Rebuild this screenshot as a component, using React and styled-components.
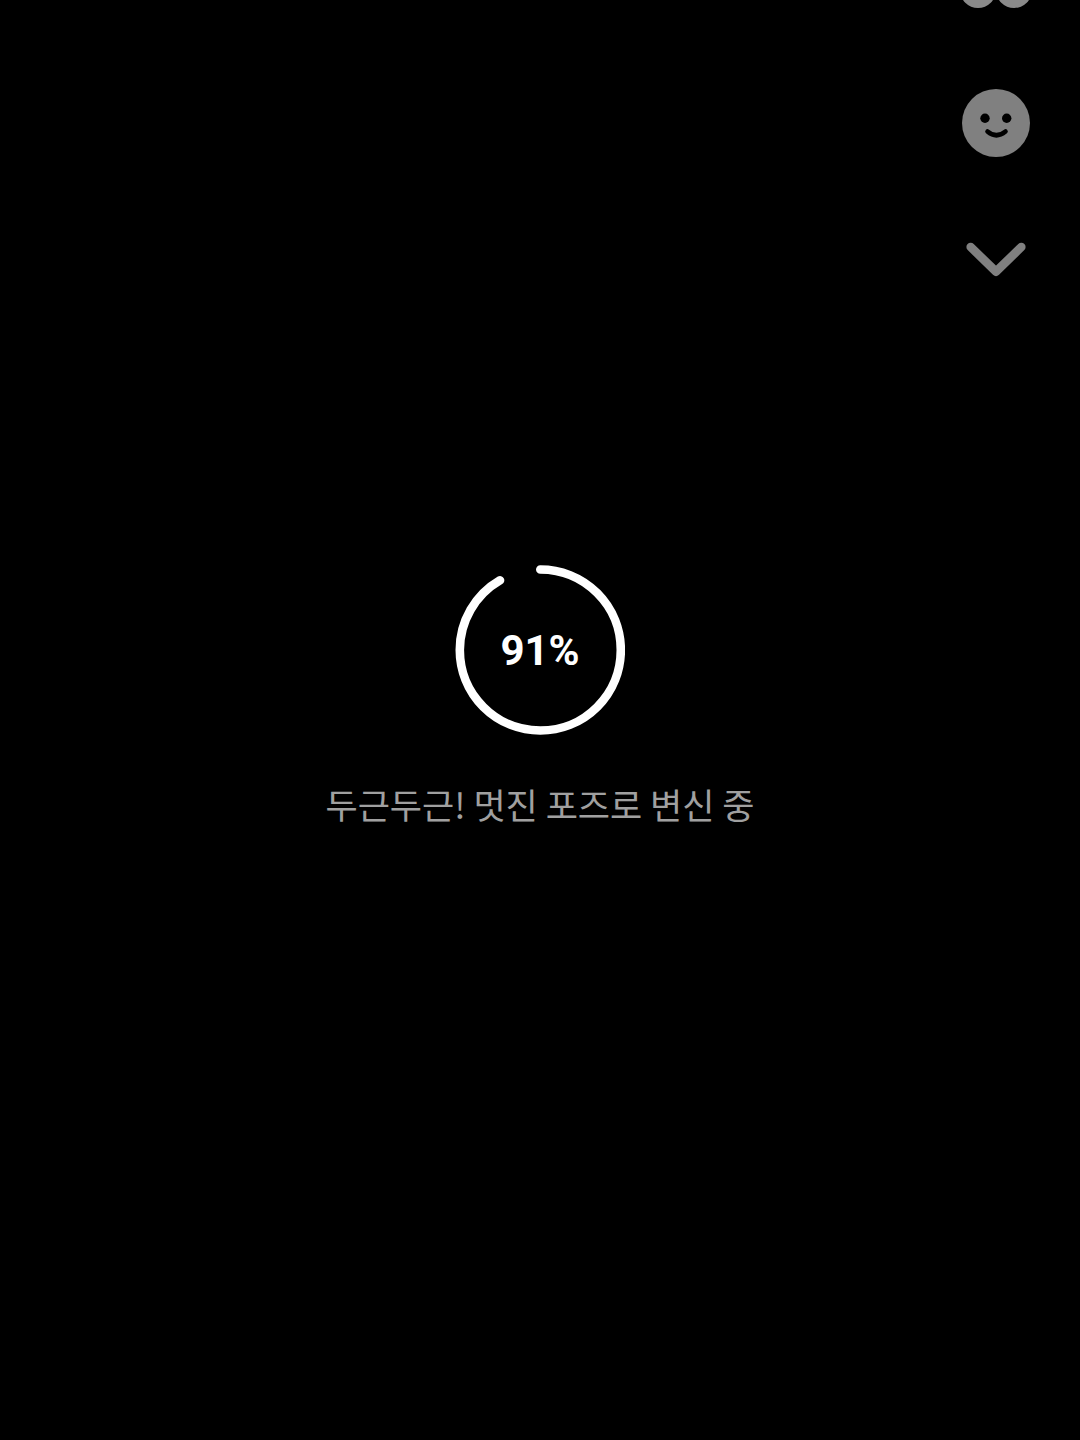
import React from "react";
import styled, { createGlobalStyle } from "styled-components";

const Global = createGlobalStyle`
  html, body { margin: 0; padding: 0; background: #000; }
`;

const Page = styled.main`
  width: 1080px;
  height: 1440px;
  background: #000;
  overflow: hidden;
  display: flex;
  flex-direction: column;
`;

const Rail = styled.nav`
  align-self: flex-end;
  width: 68px;
  margin-right: 50px;
  display: flex;
  flex-direction: column;
  align-items: center;
`;

const TopIcon = styled.svg`
  display: block;
  width: 68px;
  height: 9px;
`;

const FaceButton = styled.svg`
  display: block;
  width: 68px;
  height: 68px;
  margin-top: 80px;
`;

const Chevron = styled.svg`
  display: block;
  width: 62px;
  height: 36px;
  margin-top: 85px;
`;

const Loader = styled.section`
  margin-top: 287px;
  display: flex;
  flex-direction: column;
  align-items: center;
`;

const RingWrap = styled.div`
  position: relative;
  width: 170px;
  height: 170px;
`;

const Ring = styled.svg`
  display: block;
  width: 170px;
  height: 170px;
`;

const Percent = styled.div`
  position: absolute;
  inset: 0;
  padding-top: 2px;
  display: flex;
  align-items: center;
  justify-content: center;
  color: #fff;
  font: 700 42px/1 Roboto, "Noto Sans", sans-serif;
`;

const Message = styled.p`
  margin: 46px 0 0;
  color: #a0a0a0;
  font: 400 35px/46px "Noto Sans CJK KR", "Noto Sans", sans-serif;
  white-space: nowrap;
`;

const R = 80.5;
const C = 2 * Math.PI * R;
const GREY = "#808080";

export default function App() {
  return (
    <Page>
      <Global />
      <Rail>
        <TopIcon viewBox="0 0 68 9" aria-hidden="true">
          <circle cx="16" cy="-10" r="18" fill="#8a8a8a" />
          <circle cx="52" cy="-10" r="18" fill="#8a8a8a" />
        </TopIcon>
        <FaceButton viewBox="0 0 68 68" aria-hidden="true">
          <circle cx="34" cy="34" r="34" fill={GREY} />
          <circle cx="23" cy="29.3" r="4.7" fill="#000" />
          <circle cx="44.7" cy="29.3" r="4.7" fill="#000" />
          <path d="M25.5 42.5Q34.3 50 43.5 42.5" fill="none" stroke="#000" strokeWidth="4.6" strokeLinecap="round" />
        </FaceButton>
        <Chevron viewBox="0 0 62 36" aria-hidden="true">
          <path d="M5.7 5L31 29.7L56.3 5" fill="none" stroke={GREY} strokeWidth="8.6" strokeLinecap="round" strokeLinejoin="round" />
        </Chevron>
      </Rail>
      <Loader>
        <RingWrap>
          <Ring viewBox="0 0 170 170" aria-hidden="true">
            <circle
              cx="85.3"
              cy="85"
              r={R}
              fill="none"
              stroke="#fff"
              strokeWidth="8.6"
              strokeLinecap="round"
              strokeDasharray={`${C * 0.915} ${C}`}
              transform="rotate(-90 85.3 85)"
            />
          </Ring>
          <Percent>91%</Percent>
        </RingWrap>
        <Message>두근두근! 멋진 포즈로 변신 중</Message>
      </Loader>
    </Page>
  );
}
